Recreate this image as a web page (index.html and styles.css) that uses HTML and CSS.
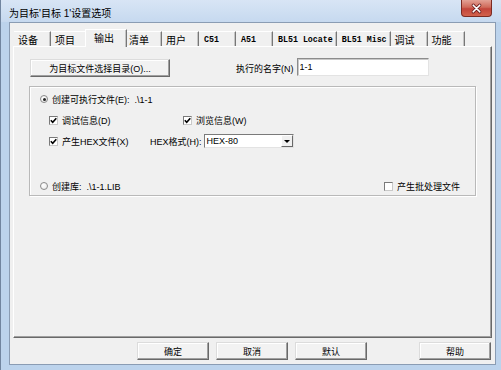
FILE: index.html
```html
<!DOCTYPE html>
<html lang="zh-CN">
<head>
    <meta charset="UTF-8">
    <title>为目标'目标 1'设置选项</title>
    <link rel="stylesheet" href="styles.css">
</head>
<body>
    <div class="window">
        <!-- Title bar -->
        <div class="titlebar">
            <span class="title">为目标'目标 1'设置选项</span>
            <button class="close" aria-label="关闭">
                <svg width="31" height="17" viewBox="0 0 31 17">
                    <path d="M12 5 L19 12 M19 5 L12 12" stroke="#6b1f1f" stroke-width="3.4" stroke-linecap="round"/>
                    <path d="M12 5 L19 12 M19 5 L12 12" stroke="#ffffff" stroke-width="1.8" stroke-linecap="round"/>
                </svg>
            </button>
        </div>

        <div class="client">
            <!-- Tabs -->
            <div class="tabs">
                <span class="tab">设备</span>
                <span class="tab">项目</span>
                <span class="tab tab-active">输出</span>
                <span class="tab">清单</span>
                <span class="tab">用户</span>
                <span class="tab tab-mono">C51</span>
                <span class="tab tab-mono">A51</span>
                <span class="tab tab-mono">BL51 Locate</span>
                <span class="tab tab-mono">BL51 Misc</span>
                <span class="tab">调试</span>
                <span class="tab">功能</span>
            </div>

            <!-- Tab page -->
            <div class="panel">
                <div class="top-row">
                    <button class="btn btn-dir">为目标文件选择目录(O)...</button>
                    <span class="name-label">执行的名字(N)</span>
                    <input class="name-input" type="text" value="1-1">
                </div>

                <div class="group">
                    <div class="row">
                        <span class="radio radio-on"></span>
                        <span>创建可执行文件(E):&nbsp; .\1-1</span>
                    </div>
                    <div class="row row-sub">
                        <span class="opt opt-debug"><span class="check"><svg width="7" height="7" viewBox="0 0 7 7"><path d="M0.8 3.2 L2.7 5.2 L6.3 1.2" fill="none" stroke="#000" stroke-width="1.6"/></svg></span>调试信息(D)</span>
                        <span class="opt"><span class="check"><svg width="7" height="7" viewBox="0 0 7 7"><path d="M0.8 3.2 L2.7 5.2 L6.3 1.2" fill="none" stroke="#000" stroke-width="1.6"/></svg></span>浏览信息(W)</span>
                    </div>
                    <div class="row row-sub">
                        <span class="opt opt-hex"><span class="check"><svg width="7" height="7" viewBox="0 0 7 7"><path d="M0.8 3.2 L2.7 5.2 L6.3 1.2" fill="none" stroke="#000" stroke-width="1.6"/></svg></span>产生HEX文件(X)</span>
                        <span class="hex-label">HEX格式(H):</span>
                        <span class="select">
                            <span class="select-value">HEX-80</span>
                            <span class="select-arrow"></span>
                        </span>
                    </div>
                    <div class="row row-last">
                        <span class="radio"></span>
                        <span>创建库:&nbsp; .\1-1.LIB</span>
                        <span class="opt opt-batch"><span class="check"></span>产生批处理文件</span>
                    </div>
                </div>
            </div>

            <!-- Dialog buttons -->
            <div class="actions">
                <button class="btn btn-action">确定</button>
                <button class="btn btn-action">取消</button>
                <button class="btn btn-action">默认</button>
                <button class="btn btn-action btn-help">帮助</button>
            </div>
        </div>
    </div>
</body>
</html>
```

FILE: styles.css
```css
:root {
    --face: #f0f0f0;
    --frame: #bcd3ec;
    --shadow: #a0a0a0;
    --dark-shadow: #696969;
    --font: "Liberation Sans", "Noto Sans CJK SC", sans-serif;
}

body {
    margin: 0;
    background-color: var(--frame);
    font-family: var(--font);
    font-size: 9px;
    color: #000;
}

.window {
    box-sizing: border-box;
    width: 501px;
    height: 370px;
    display: flex;
    flex-direction: column;
    padding: 0 5px 5px 8px;
    background: linear-gradient(to bottom, #d8e5f5 0, #c6d9ef 22px, var(--frame) 22px);
    border-left: 1px solid #71859f;
}

/* Title bar */
.titlebar {
    height: 22px;
    display: flex;
    align-items: center;
}

.title {
    font-size: 10px;
    margin-top: 2px;
}

.close {
    align-self: flex-start;
    margin-left: auto;
    margin-right: 4px;
    width: 31px;
    height: 17px;
    padding: 0;
    border: 1px solid #7c2b22;
    border-top: none;
    border-radius: 0 0 4px 4px;
    background: linear-gradient(to bottom, #e3a195 0, #d06a5a 45%, #c2443a 55%, #d2624c 100%);
    display: flex;
}

/* Client area */
.client {
    flex: 1;
    display: flex;
    flex-direction: column;
    padding: 6px 3px 4px 3px;
    background-color: var(--face);
    border: 1px solid #8a9cb3;
}

.tabs {
    display: flex;
    align-items: flex-end;
    margin-left: 1px;
    height: 17px;
}

.tab {
    box-sizing: border-box;
    min-width: 37px;
    height: 15px;
    padding: 0 3px 0 4px;
    display: flex;
    align-items: center;
    font-size: 10px;
    border-top: 1px solid #ffffff;
    border-right: 1px solid #777777;
    box-shadow: inset -1px 0 0 #c4c4c4;
}

.tab-active {
    position: relative;
    z-index: 1;
    min-width: 42px;
    height: 18px;
    margin: 0 -2px -1px -3px;
    padding-left: 8px;
    padding-bottom: 2px;
    background-color: var(--face);
    border-left: 1px solid #ffffff;
}

.tab-mono {
    font-family: "Liberation Mono", monospace;
    font-weight: bold;
    font-size: 8.3px;
    padding-left: 5px;
}

.panel {
    flex: 1;
    display: flex;
    flex-direction: column;
    padding: 12px 15px 0 16px;
    border-top: 1px solid #ffffff;
    border-left: 1px solid #ffffff;
    border-right: 1px solid var(--dark-shadow);
    border-bottom: 1px solid var(--dark-shadow);
    box-shadow: inset -1px -1px 0 var(--shadow);
}

/* Buttons */
.btn {
    box-sizing: border-box;
    height: 18px;
    padding: 0;
    font-family: var(--font);
    font-size: 9px;
    background-color: #f2f2f2;
    border: 1px solid;
    border-color: #dcdcdc var(--dark-shadow) var(--dark-shadow) #dcdcdc;
    box-shadow: inset -1px -1px 0 var(--shadow), inset 1px 1px 0 #ffffff;
}

.top-row {
    display: flex;
    align-items: center;
}

.btn-dir {
    width: 140px;
}

.name-label {
    margin-left: 66px;
    margin-right: 3px;
}

.name-input {
    box-sizing: border-box;
    width: 132px;
    height: 18px;
    margin-top: -2px;
    padding: 0 2px;
    font-family: var(--font);
    font-size: 9px;
    background: #fff;
    border: 1px solid;
    border-color: #8c8c8c #e3e3e3 #e3e3e3 #8c8c8c;
    box-shadow: inset 1px 1px 0 #c8c8c8;
}

/* Group box */
.group {
    box-sizing: border-box;
    height: 110px;
    margin: 9px 0 0 -1px;
    padding: 5px 15px 2px 10px;
    display: flex;
    flex-direction: column;
    border: 1px solid #b9b9b9;
    box-shadow: inset 1px 1px 0 #ffffff, 1px 1px 0 #ffffff;
}

.row {
    height: 14px;
    display: flex;
    align-items: center;
    gap: 4px;
}

.row-sub {
    margin-top: 7px;
    padding-left: 9px;
    gap: 0;
}

.row-last {
    margin-top: auto;
}

.radio {
    box-sizing: border-box;
    width: 8px;
    height: 8px;
    border: 1px solid #8a8a8a;
    border-radius: 50%;
    background: radial-gradient(circle at 35% 35%, #ffffff, #e6e6e6);
    display: flex;
    align-items: center;
    justify-content: center;
}

.radio-on::after {
    content: "";
    width: 3px;
    height: 3px;
    border-radius: 50%;
    background-color: #222;
}

.opt {
    display: flex;
    align-items: center;
    gap: 4px;
}

.opt-debug {
    width: 134px;
}

.opt-hex {
    width: 101px;
}

.opt-batch {
    margin-left: auto;
}

.check {
    box-sizing: border-box;
    width: 9px;
    height: 9px;
    background-color: #fff;
    border: 1px solid;
    border-color: #7a7a7a #c9c9c9 #c9c9c9 #7a7a7a;
    display: flex;
    align-items: center;
    justify-content: center;
}

.hex-label {
    margin-right: 2px;
}

.select {
    box-sizing: border-box;
    width: 90px;
    height: 14px;
    display: flex;
    background-color: #fff;
    border: 1px solid;
    border-color: #7a7a7a #e3e3e3 #e3e3e3 #7a7a7a;
}

.select-value {
    flex: 1;
    padding-left: 2px;
    line-height: 12px;
}

.select-arrow {
    box-sizing: border-box;
    width: 12px;
    background-color: var(--face);
    border: 1px solid;
    border-color: #ffffff var(--dark-shadow) var(--dark-shadow) #ffffff;
    display: flex;
    align-items: center;
    justify-content: center;
}

.select-arrow::after {
    content: "";
    border-left: 3px solid transparent;
    border-right: 3px solid transparent;
    border-top: 3px solid #000;
}

/* Dialog buttons */
.actions {
    display: flex;
    gap: 7px;
    margin-top: 4px;
    padding: 0 1px 0 124px;
}

.btn-action {
    width: 72px;
}

.btn-help {
    margin-left: auto;
}
```
